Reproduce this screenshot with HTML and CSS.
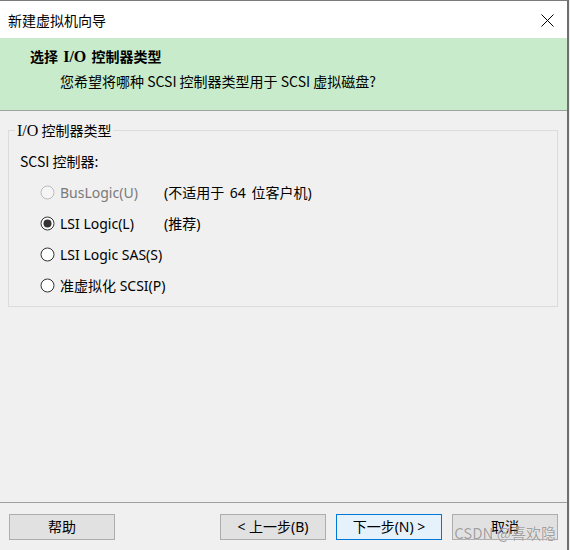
FILE: index.html
```html
<!DOCTYPE html>
<html lang="zh-CN">
<head>
<meta charset="utf-8">
<title>新建虚拟机向导</title>
<link rel="stylesheet" href="styles.css">
</head>
<body>
<div class="window">
  <div class="titlebar">
    <span class="title">新建虚拟机向导</span>
    <svg class="close" width="13" height="13" viewBox="0 0 13 13"><path d="M0.5 0.5 L12.5 12.5 M12.5 0.5 L0.5 12.5" stroke="#000" stroke-width="1" fill="none"/></svg>
  </div>
  <div class="header">
    <div class="h-title">选择 <span class="serif">I/O</span> 控制器类型</div>
    <div class="h-sub">您希望将哪种 SCSI 控制器类型用于 SCSI 虚拟磁盘?</div>
  </div>
  <div class="content">
    <fieldset class="group">
      <legend><span class="serif">I/O</span> 控制器类型</legend>
      <div class="scsi-label">SCSI 控制器:</div>
      <div class="options">
        <div class="row">
          <span class="opt disabled">
            <svg class="radio" width="15" height="15" viewBox="0 0 15 15"><circle cx="7.5" cy="7.5" r="6.5" fill="#f5f5f5" stroke="#bcbcbc"/></svg>
            <span>BusLogic(U)</span>
          </span>
          <span class="note">(不适用于 64 位客户机)</span>
        </div>
        <div class="row">
          <span class="opt">
            <svg class="radio" width="15" height="15" viewBox="0 0 15 15"><circle cx="7.5" cy="7.5" r="6.5" fill="#fff" stroke="#333"/><circle cx="7.5" cy="7.5" r="4" fill="#333"/></svg>
            <span>LSI Logic(L)</span>
          </span>
          <span class="note">(推荐)</span>
        </div>
        <div class="row">
          <span class="opt">
            <svg class="radio" width="15" height="15" viewBox="0 0 15 15"><circle cx="7.5" cy="7.5" r="6.5" fill="#fff" stroke="#333"/></svg>
            <span>LSI Logic SAS(S)</span>
          </span>
        </div>
        <div class="row">
          <span class="opt">
            <svg class="radio" width="15" height="15" viewBox="0 0 15 15"><circle cx="7.5" cy="7.5" r="6.5" fill="#fff" stroke="#333"/></svg>
            <span>准虚拟化 SCSI(P)</span>
          </span>
        </div>
      </div>
    </fieldset>
  </div>
  <div class="footer">
    <button class="btn">帮助</button>
    <button class="btn push">&lt; 上一步(B)</button>
    <button class="btn primary">下一步(N) &gt;</button>
    <button class="btn">取消</button>
  </div>
  <div class="watermark">CSDN @喜欢隐</div>
</div>
</body>
</html>
```

FILE: styles.css
```css
html, body {
  margin: 0;
  padding: 0;
  background: #f0f0f0;
}

body {
  font-family: "Noto Sans CJK SC", "Noto Sans", sans-serif;
  font-size: 14px;
  color: #000;
}

.window {
  position: relative;
  width: 567px;
  height: 549px;
  border-top: 1px solid #7a7a7a;
  border-right: 2px solid #6f6f6f;
  background: #f0f0f0;
  display: flex;
  flex-direction: column;
}

.titlebar {
  height: 37px;
  flex: none;
  background: #fff;
  display: flex;
  align-items: center;
  justify-content: space-between;
  padding: 0 13px 0 8px;
}

.title {
  line-height: 20px;
}

.close {
  display: block;
  margin-top: 1px;
}

.header {
  flex: none;
  box-sizing: border-box;
  height: 73px;
  background: #c7ebcb;
  border-bottom: 1px solid #a0a0a0;
  padding: 8px 0 0 30px;
}

.h-title {
  font-weight: bold;
  line-height: 20px;
  word-spacing: 2px;
}

.serif {
  font-family: "Liberation Serif", "Noto Sans CJK SC", serif;
  font-size: 16px;
}

.h-sub {
  margin-top: 4px;
  margin-left: 30px;
  line-height: 20px;
}

.content {
  flex: 1;
  box-sizing: border-box;
  padding: 11px 9px 0 8px;
  border-bottom: 1px solid #a0a0a0;
}

.group {
  margin: 0;
  padding: 0 0 5px 6px;
  border: 1px solid #dcdcdc;
  min-width: 0;
}

.group legend {
  padding: 0 2px;
  line-height: 17px;
}

.scsi-label {
  margin: 12px 0 0 5px;
  line-height: 20px;
}

.options {
  margin: 6px 0 0 25px;
  font-family: "Noto Sans", "Noto Sans CJK SC", sans-serif;
}

.row {
  height: 31px;
  display: grid;
  grid-template-columns: 124px auto;
  align-items: center;
  white-space: nowrap;
}

.opt {
  display: flex;
  align-items: center;
  gap: 5px;
  line-height: 20px;
}

.radio {
  display: block;
  flex: none;
}

.opt.disabled {
  color: #7a7a7a;
}

.note {
  line-height: 20px;
  word-spacing: 2px;
}

.footer {
  flex: none;
  height: 47px;
  box-sizing: border-box;
  padding: 11px 9px 0 9px;
  display: flex;
  align-items: flex-start;
  gap: 10px;
}

.btn {
  width: 106px;
  height: 26px;
  box-sizing: border-box;
  border: 1px solid #adadad;
  background: #e1e1e1;
  font-family: "Noto Sans", "Noto Sans CJK SC", sans-serif;
  font-size: 14px;
  color: #000;
  padding: 0;
  line-height: 22px;
}

.btn.push {
  margin-left: auto;
}

.btn.primary {
  border-color: #0078d7;
  background: #e5f1fb;
}

.watermark {
  position: absolute;
  right: 11px;
  bottom: 7px;
  font-size: 15px;
  line-height: 20px;
  color: rgba(135, 135, 135, 0.8);
  text-shadow: 0 0 1px #fff;
  pointer-events: none;
}
```
